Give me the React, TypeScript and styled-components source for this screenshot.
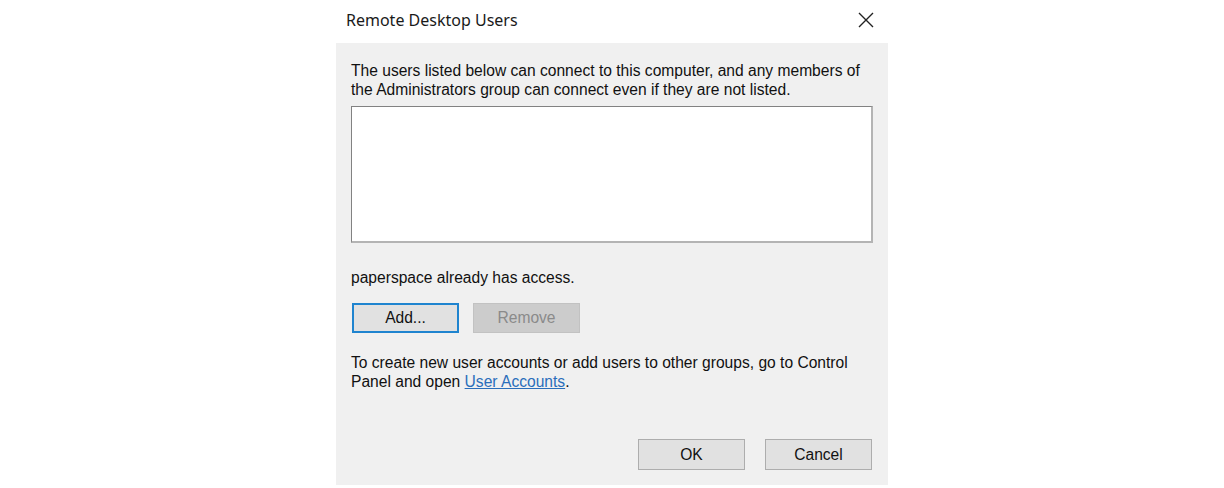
import React from "react";
import styled, { createGlobalStyle } from "styled-components";

const GlobalStyle = createGlobalStyle`
  html, body {
    margin: 0;
    padding: 0;
    background: #ffffff;
  }
`;

const Page = styled.div`
  width: 1224px;
  height: 488px;
  display: flex;
  justify-content: center;
`;

const Dialog = styled.div`
  width: 552px;
  height: 485px;
  display: flex;
  flex-direction: column;
  background: #f0f0f0;
  font-family: "Liberation Sans", Arial, sans-serif;
  color: #111;
`;

const TitleBar = styled.div`
  height: 43px;
  flex: none;
  background: #ffffff;
  display: flex;
  align-items: center;
  justify-content: space-between;
  padding: 0 10px 4px 10px;
  box-sizing: border-box;
`;

const Title = styled.span`
  font-family: "Noto Sans", "Open Sans", sans-serif;
  font-size: 16px;
  color: #1a1a1a;
`;

const CloseButton = styled.button`
  width: 24px;
  height: 24px;
  border: none;
  background: transparent;
  padding: 0;
  display: flex;
  align-items: center;
  justify-content: center;
`;

const Body = styled.div`
  flex: 1;
  display: flex;
  flex-direction: column;
  padding: 18px 15px 15px 15px;
`;

const Text = styled.p<{ $gap?: number }>`
  margin: ${(p) => p.$gap ?? 0}px 0 0 0;
  font-size: 15.6px;
  line-height: 19px;
`;

const ListBox = styled.div`
  margin-top: 7px;
  height: 134px;
  background: #ffffff;
  border-style: solid;
  border-width: 1px 2px 2px 1px;
  border-color: #828282 #b4b4b4 #b4b4b4 #828282;
`;

const ButtonRow = styled.div<{ $end?: boolean }>`
  display: flex;
  gap: ${(p) => (p.$end ? 20 : 14)}px;
  justify-content: ${(p) => (p.$end ? "flex-end" : "flex-start")};
  margin-top: ${(p) => (p.$end ? "auto" : "16px")};
  padding-left: ${(p) => (p.$end ? 0 : 1)}px;
  padding-right: ${(p) => (p.$end ? 1 : 0)}px;
`;

const Button = styled.button<{ $focus?: boolean; $tall?: boolean }>`
  width: 107px;
  height: ${(p) => (p.$tall ? 31 : 30)}px;
  box-sizing: border-box;
  background: ${(p) => (p.disabled ? "#cccccc" : "#e1e1e1")};
  border: ${(p) =>
    p.$focus
      ? "2px solid #1f84cf"
      : p.disabled
      ? "1px solid #c2c2c2"
      : "1px solid #adadad"};
  color: ${(p) => (p.disabled ? "#8a8a8a" : "#111")};
  font-family: "Liberation Sans", Arial, sans-serif;
  font-size: 15.6px;
  padding: 0;
`;

const Link = styled.a`
  color: #2a6ebb;
  text-decoration: underline;
`;

function CloseIcon() {
  return (
    <svg width="16" height="16" viewBox="0 0 16 16">
      <path d="M1 1 L15 15 M15 1 L1 15" stroke="#222" strokeWidth="1.4" />
    </svg>
  );
}

export default function App() {
  return (
    <>
      <GlobalStyle />
      <Page>
        <Dialog>
          <TitleBar>
            <Title>Remote Desktop Users</Title>
            <CloseButton aria-label="Close">
              <CloseIcon />
            </CloseButton>
          </TitleBar>
          <Body>
            <Text>
              The users listed below can connect to this computer, and any members of
              <br />
              the Administrators group can connect even if they are not listed.
            </Text>
            <ListBox />
            <Text $gap={25}>paperspace already has access.</Text>
            <ButtonRow>
              <Button $focus>Add...</Button>
              <Button disabled>Remove</Button>
            </ButtonRow>
            <Text $gap={20}>
              To create new user accounts or add users to other groups, go to Control
              <br />
              Panel and open <Link href="#">User Accounts</Link>.
            </Text>
            <ButtonRow $end>
              <Button $tall>OK</Button>
              <Button $tall>Cancel</Button>
            </ButtonRow>
          </Body>
        </Dialog>
      </Page>
    </>
  );
}
